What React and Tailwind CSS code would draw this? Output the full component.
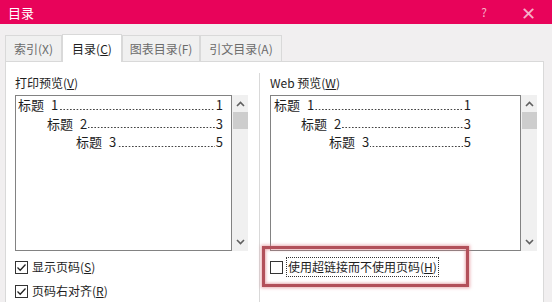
import React from 'react'

const font = { fontFamily: '"Noto Sans CJK SC", "Noto Sans", sans-serif' }

function Chevron({ up }) {
  return (
    <svg width="9" height="6" viewBox="0 0 9 6" className="block">
      <path
        d={up ? 'M1 5 L4.5 1.5 L8 5' : 'M1 1 L4.5 4.5 L8 1'}
        fill="none"
        stroke="#606060"
        strokeWidth="1.6"
      />
    </svg>
  )
}

function Scrollbar() {
  return (
    <div className="w-[16px] h-[156px] bg-[#f0f0f0] flex flex-col items-center">
      <div className="h-[16px] flex items-center justify-center pt-[1px]">
        <Chevron up />
      </div>
      <div className="w-[15px] h-[17px] bg-[#cdcdcd] mt-[1px]" />
      <div className="flex-1" />
      <div className="h-[16px] flex items-center justify-center mb-[1px]">
        <Chevron />
      </div>
    </div>
  )
}

function TocLine({ indent, num, page }) {
  return (
    <div className="flex h-[18.5px] items-center whitespace-nowrap" style={{ paddingLeft: indent }}>
      <span>标题</span>
      <span className="ml-[7px]">{num}</span>
      <span className="flex-1 self-stretch mx-[1px] mb-[4px] bg-[radial-gradient(circle,#444_0.6px,transparent_0.9px)] bg-[length:3.3px_3px] bg-repeat-x bg-bottom" />
      <span>{page}</span>
    </div>
  )
}

function Preview({ width, pr, indents }) {
  const rows = [
    ['1', '1'],
    ['2', '3'],
    ['3', '5'],
  ]
  return (
    <div className="flex">
      <div
        className="h-[156px] border border-[#828282] bg-white pl-[1px] text-[13px] text-[#1e1e1e] leading-[18px]"
        style={{ width, paddingRight: pr }}
      >
        {rows.map(([n, p], i) => (
          <TocLine key={i} indent={indents[i]} num={n} page={p} />
        ))}
      </div>
      <Scrollbar />
    </div>
  )
}

function Check({ checked }) {
  return (
    <div className="w-[13px] h-[13px] border border-[#333] bg-white flex items-center justify-center">
      {checked && (
        <svg width="11" height="11" viewBox="0 0 11 11">
          <path d="M1.5 5.5 L4.2 8.2 L9.5 2.5" fill="none" stroke="#222" strokeWidth="1.3" />
        </svg>
      )}
    </div>
  )
}

const tabs = [
  { t: '索引(X)', w: 57 },
  { t: '目录', k: 'C', w: 60, active: true },
  { t: '图表目录(F)', w: 78 },
  { t: '引文目录(A)', w: 82 },
]

export default function App() {
  return (
    <div className="w-[552px] h-[302px] overflow-hidden bg-[#f1eff0] relative" style={font}>
      <div className="h-[24px] bg-[#e8035a] flex items-center pl-[8px] pr-[16px] text-white text-[13px] leading-none">
        <span>目录</span>
        <span className="ml-auto text-[#f6b0c8] text-[12px]">?</span>
        <span className="ml-[34px] text-[#f6b0c8] text-[18px] font-light">✕</span>
      </div>

      <div className="flex items-end h-[37px] pl-[5px] text-[12px] leading-none">
        {tabs.map((tab, i) => (
          <div
            key={i}
            className={
              tab.active
                ? 'h-[28px] bg-white border border-b-0 border-[#d9d9d9] flex items-center justify-center text-[#1e1e1e] relative top-[1px]'
                : 'h-[26px] bg-[#f0f0f0] border border-b-0 border-[#d9d9d9] flex items-center justify-center text-[#6b6b6b]'
            }
            style={{ width: tab.w }}
          >
            {tab.k ? (
              <span>
                {tab.t}(<span className="underline">{tab.k}</span>)
              </span>
            ) : (
              tab.t
            )}
          </div>
        ))}
      </div>

      <div className="ml-[5px] w-[539px] h-[260px] bg-white border border-[#d9d9d9] flex text-[12px] text-[#1e1e1e]">
        <div className="pl-[9px] pt-[12px] w-[253px]">
          <div className="h-[18px] leading-[18px] mb-[3px]">
            打印预览(<span className="underline">V</span>)
          </div>
          <Preview width={217} pr={8} indents={[1, 30, 59]} />
          <div className="mt-[6px] flex items-center h-[20px] gap-[4px]">
            <Check checked />
            <span>
              显示页码(<span className="underline">S</span>)
            </span>
          </div>
          <div className="mt-[4px] flex items-center h-[20px] gap-[4px]">
            <Check checked />
            <span>
              页码右对齐(<span className="underline">R</span>)
            </span>
          </div>
        </div>

        <div className="mt-[11px] border-l border-[#d9d9d9] pl-[10px] pt-[1px]">
          <div className="h-[18px] leading-[18px] mb-[3px]">
            Web 预览(<span className="underline">W</span>)
          </div>
          <Preview width={251} pr={49} indents={[2, 29, 57]} />
          <div className="mt-[6px] flex items-center h-[20px] gap-[3px]">
            <Check />
            <span className="border border-dotted border-[#333] px-[1px] leading-[18px]">
              使用超链接而不使用页码(<span className="underline">H</span>)
            </span>
          </div>
        </div>
      </div>

      <div className="absolute left-[262px] top-[246px] w-[207px] h-[41px] border-[3px] border-[#b2505a] shadow-[0_0_3px_1px_rgba(220,120,130,0.6),inset_0_0_3px_1px_rgba(220,120,130,0.6)]" />
    </div>
  )
}
